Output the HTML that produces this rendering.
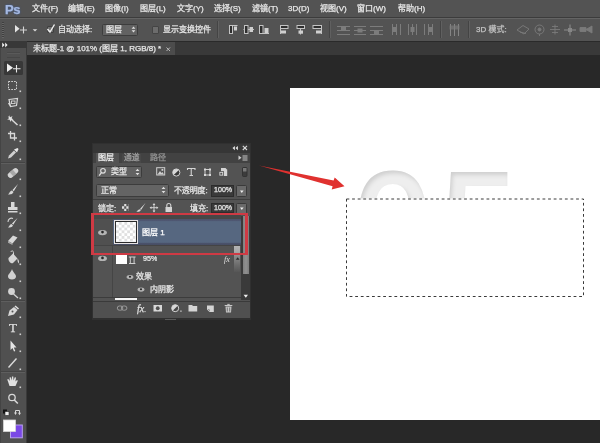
<!DOCTYPE html>
<html><head><meta charset="utf-8">
<style>
html,body{margin:0;padding:0;}
body{width:600px;height:443px;overflow:hidden;background:#282828;position:relative;font-family:"Liberation Sans","Noto Sans CJK SC",sans-serif;font-size:8px;color:#e8e8e8;line-height:1;}
.a{position:absolute;}
.t{position:absolute;white-space:nowrap;}
#menubar{left:0;top:0;width:600px;height:17px;background:#535353;}
#optbar{left:0;top:17px;width:600px;height:24px;background:#535353;border-top:1px solid #3c3c3c;box-sizing:border-box;}
#optbar:before{content:"";position:absolute;left:0;top:0;width:600px;height:1px;background:#646464;}
#tabbar{left:0;top:41px;width:600px;height:13.5px;background:#393939;border-top:1px solid #2a2a2a;box-sizing:border-box;}
#tab{left:27px;top:41.5px;width:148px;height:13.5px;background:#4c4c4c;}
#tools{left:0;top:41px;width:27px;height:402px;background:#505050;}
#toolshead{left:0;top:41px;width:27px;height:7px;background:#383838;}
#canvas{left:290px;top:88px;width:310px;height:332px;background:#fff;}
.m{top:5px;}
.t{-webkit-text-stroke:0.25px currentColor;will-change:transform;}
</style></head><body>
<div class="a" id="menubar"></div>
<div class="a" id="optbar"></div>
<div class="a" id="tabbar"></div>
<div class="a" id="tab"></div>
<div class="a" id="tools"></div>
<div class="a" id="toolshead"></div>
<div class="a" id="canvas"></div>

<!-- menu -->
<div class="t" style="left:4.8px;top:2.6px;font-size:13px;font-weight:bold;color:#a6b9e0;letter-spacing:-0.4px;text-shadow:0 0 2px #3a5fa8;">Ps</div>
<div class="t m" style="left:31.5px;">文件(F)</div>
<div class="t m" style="left:68.2px;">编辑(E)</div>
<div class="t m" style="left:104.8px;">图像(I)</div>
<div class="t m" style="left:140px;">图层(L)</div>
<div class="t m" style="left:176.5px;">文字(Y)</div>
<div class="t m" style="left:213.5px;">选择(S)</div>
<div class="t m" style="left:251.5px;">滤镜(T)</div>
<div class="t m" style="left:288px;">3D(D)</div>
<div class="t m" style="left:320px;">视图(V)</div>
<div class="t m" style="left:357.3px;">窗口(W)</div>
<div class="t m" style="left:398px;">帮助(H)</div>


<!-- options bar -->
<div class="a" style="left:1.5px;top:22px;width:2px;height:16px;background:repeating-linear-gradient(#3a3a3a 0 1px,#6a6a6a 1px 2px);opacity:.8"></div>
<svg class="a" style="left:13px;top:23px" width="26" height="13" viewBox="0 0 26 13">
 <path d="M2 2 L2 9.6 L6.6 5.8 Z" fill="#e4e4e4"/>
 <path d="M10.5 3.5 V10.5 M7 7 H14" stroke="#d4d4d4" stroke-width="1.1" fill="none"/>
 <path d="M19.7 6.2 H24.3 L22 8.6 Z" fill="#d8d8d8"/>
</svg>
<div class="a" style="left:46.5px;top:26px;width:7px;height:7px;background:#6e6e6e;border:0.5px solid #3f3f3f;border-radius:1px;box-sizing:border-box"></div>
<svg class="a" style="left:45px;top:21.7px" width="12" height="13" viewBox="0 0 12 13"><path d="M2.5 7 L5 10 L9.5 2.5" stroke="#f0f0f0" stroke-width="1.4" fill="none"/></svg>
<div class="t" style="left:58px;top:26.3px;">自动选择:</div>
<div class="a" style="left:101.5px;top:23.5px;width:36px;height:12px;background:#626262;border:1px solid #3d3d3d;border-radius:1.5px;box-sizing:border-box"></div>
<div class="t" style="left:106px;top:26.3px;">图层</div>
<svg class="a" style="left:130px;top:25px" width="7" height="9" viewBox="0 0 7 9"><path d="M1.6 3.7 L3.5 1.4 L5.4 3.7 Z M1.6 5.3 L3.5 7.6 L5.4 5.3 Z" fill="#e0e0e0"/></svg>
<div class="a" style="left:151.5px;top:26px;width:7.5px;height:7.5px;background:#6c6c6c;border:0.5px solid #444;border-radius:1px;box-sizing:border-box"></div>
<div class="t" style="left:162.5px;top:26.3px;">显示变换控件</div>
<div class="a" style="left:217px;top:21px;width:1px;height:17px;background:#444"></div>
<div class="a" style="left:218px;top:21px;width:1px;height:17px;background:#606060"></div>
<svg class="a" style="left:226px;top:22px" width="100" height="15" viewBox="0 0 100 15" shape-rendering="auto">
 <g stroke="#c4c4c4" stroke-width="1" fill="#2e2e2e">
  <path d="M3 3.5 H11.5" fill="none"/><rect x="3.5" y="3.5" width="3" height="8"/><rect x="8" y="4.5" width="3" height="4" fill="#cfcfcf" stroke="none"/>
  <path d="M17.5 7.5 H28" fill="none"/><rect x="18.5" y="3.5" width="3.5" height="8"/><rect x="23.5" y="5" width="3.5" height="5" fill="#cfcfcf" stroke="none"/>
  <path d="M33 11.5 H43" fill="none"/><rect x="33.5" y="3.5" width="3.5" height="8"/><rect x="38.5" y="6" width="4" height="5" fill="#cfcfcf" stroke="none"/>
  <path d="M54.5 3 V12" fill="none"/><rect x="54.5" y="3.5" width="7.5" height="3"/><rect x="55" y="8.5" width="5" height="3" fill="#cfcfcf" stroke="none"/>
  <path d="M74.5 3 V12.5" fill="none"/><rect x="71" y="3.5" width="7.5" height="3"/><rect x="72.5" y="8.5" width="4.5" height="3.2" fill="#cfcfcf" stroke="none"/>
  <path d="M95.5 3 V12" fill="none"/><rect x="87" y="3.5" width="8.5" height="3"/><rect x="90" y="8.5" width="5" height="3" fill="#cfcfcf" stroke="none"/>
 </g>
</svg>
<div class="a" style="left:329px;top:21px;width:1px;height:17px;background:#444"></div>
<div class="a" style="left:330px;top:21px;width:1px;height:17px;background:#606060"></div>
<svg class="a" style="left:335px;top:22px" width="100" height="15" viewBox="0 0 100 15">
 <g stroke="#7c7c7c" stroke-width="1" fill="none">
  <path d="M2 4.5 H15 M2 8.5 H15 M2 12.5 H15"/><rect x="6" y="5" width="5" height="3" fill="#7c7c7c" stroke="none"/>
  <path d="M19 4.5 H31 M19 8.5 H31 M19 12.5 H31"/><rect x="22.5" y="6.5" width="5" height="4" fill="#7c7c7c" stroke="none"/>
  <path d="M35 4.5 H48 M35 8.5 H48 M35 12.5 H48"/><rect x="39" y="9" width="5" height="3" fill="#7c7c7c" stroke="none"/>
  <path d="M57.5 2 V13 M61.5 2 V13 M65.5 2 V13"/><rect x="58" y="5" width="3" height="5" fill="#7c7c7c" stroke="none"/>
  <path d="M73.5 2 V13 M77.5 2 V13 M81.5 2 V13"/><rect x="75.5" y="5" width="4" height="5" fill="#7c7c7c" stroke="none"/>
  <path d="M89.5 2 V13 M93.5 2 V13 M97.5 2 V13"/><rect x="94" y="5" width="3" height="5" fill="#7c7c7c" stroke="none"/>
 </g>
</svg>
<div class="a" style="left:440px;top:21px;width:1px;height:17px;background:#444"></div>
<div class="a" style="left:441px;top:21px;width:1px;height:17px;background:#606060"></div>
<svg class="a" style="left:447px;top:22px" width="16" height="15" viewBox="0 0 16 15">
 <g stroke="#858585" stroke-width="1" fill="none"><path d="M3.5 2 V14 M7.5 2 V14 M11.5 2 V14"/><rect x="2.5" y="3.5" width="10" height="4" fill="#7a7a7a" stroke="none" opacity=".7"/></g>
</svg>
<div class="a" style="left:468px;top:21px;width:1px;height:17px;background:#444"></div>
<div class="a" style="left:469px;top:21px;width:1px;height:17px;background:#606060"></div>
<div class="t" style="left:476px;top:26.3px;color:#c4c4c4">3D 模式:</div>
<svg class="a" style="left:514px;top:22px" width="82" height="15" viewBox="0 0 82 15">
 <g stroke="#7a7a7a" stroke-width="0.9" fill="none">
  <path d="M3 8 L9 3.5 L15 7 L10 12 Z M6 10 L12 11.5"/>
  <circle cx="25.5" cy="7.5" r="4.5"/><circle cx="25.5" cy="7.5" r="1.5" fill="#7a7a7a"/><path d="M25.5 12 V14"/>
  <path d="M36 7.5 H46 M41 2.5 V12.5 M38 4.5 H44 M38 10.5 H44"/>
  <path d="M50 8 H62 M56 2.5 V13.5" stroke-width="1.6"/><rect x="54" y="6" width="4" height="4" fill="#868686" stroke="none"/>
  <path d="M66 5.5 H72 V9.5 H66 Z" fill="#7a7a7a"/><path d="M72 7.5 L78 4 V11 Z" fill="#7a7a7a"/>
 </g>
</svg>


<!-- tab -->
<div class="t" style="left:33px;top:45.200px;">未标题-1 @ 101% (图层 1, RGB/8) *</div>
<svg class="a" style="left:164.500px;top:45.500px" width="7" height="7" viewBox="0 0 7 7"><path d="M1.5 1.5 L5 5 M5 1.5 L1.5 5" stroke="#b8b8b8" stroke-width="1"/></svg>
<!-- tools header -->
<svg class="a" style="left:1px;top:42px" width="8" height="6" viewBox="0 0 8 6"><path d="M1.2 0.6 L3.6 3 L1.2 5.4 Z M4.2 0.6 L6.6 3 L4.2 5.4 Z" fill="#f0f0f0"/></svg>
<div class="a" style="left:7px;top:51.5px;width:13px;height:1px;background:#484848"></div>
<div class="a" style="left:7px;top:52.5px;width:13px;height:1px;background:#5a5a5a"></div><div class="a" style="left:7px;top:57px;width:13px;height:1px;background:#464646"></div>
<div class="a" style="left:26px;top:48px;width:1px;height:395px;background:#3a3a3a"></div>
<div class="a" style="left:0px;top:48px;width:1px;height:395px;background:#444"></div>
<!-- tools -->
<div class="a" style="left:3.5px;top:61px;width:19.5px;height:14px;background:#383838;border-radius:1.5px"></div>
<svg class="a" id="toolsvg" style="left:0;top:55px" width="27" height="388" viewBox="0 55 27 388">
 <g fill="#dcdcdc" stroke="none">
  <!-- sub-tool dots -->
  <g fill="#d0d0d0">
  <rect x="19.5" y="90.5" width="1.6" height="1.6"/><rect x="19.5" y="107.5" width="1.6" height="1.6"/><rect x="19.5" y="124.5" width="1.6" height="1.6"/>
  <rect x="19.5" y="140.5" width="1.6" height="1.6"/><rect x="19.5" y="158.5" width="1.6" height="1.6"/>
  <rect x="19.5" y="178.5" width="1.6" height="1.6"/><rect x="19.5" y="195.5" width="1.6" height="1.6"/><rect x="19.5" y="212.5" width="1.6" height="1.6"/>
  <rect x="19.5" y="229.5" width="1.6" height="1.6"/><rect x="19.5" y="246.5" width="1.6" height="1.6"/><rect x="19.5" y="263.5" width="1.6" height="1.6"/>
  <rect x="19.5" y="280.5" width="1.6" height="1.6"/><rect x="19.5" y="297.5" width="1.6" height="1.6"/>
  <rect x="19.5" y="316.5" width="1.6" height="1.6"/><rect x="19.5" y="333.5" width="1.6" height="1.6"/><rect x="19.5" y="350.5" width="1.6" height="1.6"/><rect x="19.5" y="368.5" width="1.6" height="1.6"/>
  <rect x="19.5" y="386.5" width="1.6" height="1.6"/>
  </g>
  <!-- move -->
  <path d="M7 63.5 L7 72 L13 67.8 Z" fill="#f0f0f0"/>
  <path d="M16.5 65 V72.5 M13 68.7 H20.5" stroke="#e8e8e8" stroke-width="1.1" fill="none"/>
  <!-- marquee -->
  <rect x="8.5" y="81.5" width="8" height="8" fill="none" stroke="#d8d8d8" stroke-width="1" stroke-dasharray="1.6 1.2"/>
  <!-- lasso -->
  <path d="M9 99.5 L17.5 98.5 L16.5 105.5 L10.5 106.5 Z M10.5 106.5 L8.5 103" fill="none" stroke="#d8d8d8" stroke-width="1.2"/>
  <rect x="11.5" y="101" width="3.5" height="2.6" fill="none" stroke="#d8d8d8" stroke-width="0.9"/>
  <!-- wand -->
  <path d="M11 119 L17.5 125" stroke="#d8d8d8" stroke-width="1.6" fill="none"/>
  <path d="M9.5 115 L10.3 117.2 L12.5 116 L11.6 118.2 L13.5 119.5 L11.2 119.8 L10.5 122 L9.6 119.8 L7.2 119.6 L9 118.2 L7.8 116 L9.3 117 Z" fill="#e4e4e4"/>
  <!-- crop -->
  <path d="M10.5 131 V138 H17 M8 133.5 H14.5 V140.5" fill="none" stroke="#d8d8d8" stroke-width="1.3"/>
  <!-- eyedropper -->
  <path d="M8 158.5 L9 155.5 L14 150.5 L16 152.5 L11 157.5 Z" fill="#d0d0d0"/>
  <path d="M14 149.5 L17.5 148 L18.5 149 L17 152.5 Z" fill="#e8e8e8"/>
  <!-- healing -->
  <g transform="rotate(-40 13 173)"><rect x="7" y="170.3" width="12" height="5.4" rx="2.4" fill="#d4d4d4"/><rect x="11" y="170.3" width="4" height="5.4" fill="#a8a8a8"/></g>
  <!-- brush -->
  <path d="M18 184 L12.5 190 L13.8 191.3 Z" fill="#e0e0e0"/><path d="M12 190.5 L13.5 192 C 12.5 194.5 10 194.5 8 194.5 C 9.5 193.5 9.5 191 12 190.5 Z" fill="#d4d4d4"/>
  <!-- stamp -->
  <path d="M11 202 H14.5 V207 H17.5 V210 H8 V207 H11 Z" fill="#d8d8d8"/><rect x="8" y="211" width="9.5" height="1.5" fill="#d8d8d8"/>
  <!-- history brush -->
  <path d="M17.5 218 L12 223.5 L13.2 224.7 Z" fill="#e0e0e0"/><path d="M11.5 224 L13 225.5 C 12 227.5 10 227.5 8 227.5 C 9.5 226.5 9.5 224.5 11.5 224 Z" fill="#d4d4d4"/>
  <path d="M8 222 C 8 219 10.5 217.5 13 218.5" fill="none" stroke="#d0d0d0" stroke-width="1.1"/>
  <!-- eraser -->
  <path d="M8 241 L13 235.5 L17.5 237.5 L12.5 243.5 Z" fill="#d8d8d8"/><path d="M8 241 L12.5 243.5 L12.5 245 L8 242.8 Z" fill="#a8a8a8"/>
  <!-- bucket -->
  <path d="M8.5 258 L13 253.5 L17.5 258.5 L13 263 C 11 264 8 261 8.5 258 Z" fill="#d4d4d4"/><path d="M11 252 C 11 250.5 13.5 250.5 13.5 252.5 V256" fill="none" stroke="#d8d8d8" stroke-width="1"/>
  <path d="M17.5 258.5 C 19 260 19.5 262 18.5 263.5 C 17.5 262 17.5 260.5 17.5 258.5 Z" fill="#d8d8d8"/>
  <!-- blur drop -->
  <path d="M12 269 C 13 272.5 16 274 16 276.5 C 16 278.5 14.2 279.5 12 279.5 C 9.8 279.5 8 278.5 8 276.5 C 8 274 11 272.5 12 269 Z" fill="#d0d0d0"/>
  <!-- dodge -->
  <circle cx="11.5" cy="291.5" r="3.4" fill="#d4d4d4"/><path d="M13.5 294 L18 298" stroke="#d4d4d4" stroke-width="1.4"/>
  <!-- pen -->
  <path d="M8 316 L9.5 310.5 L14 307 L17.5 310 L14 314.5 Z" fill="#d8d8d8"/><path d="M15 306 L18.5 309" stroke="#e0e0e0" stroke-width="1.6"/><circle cx="12.5" cy="311.5" r="1" fill="#535353"/>
  <!-- path select -->
  <path d="M10.5 340.5 L10.5 350 L12.5 348 L14 351.5 L15.3 351 L13.8 347.5 L16.5 347.5 Z" fill="#e4e4e4"/>
  <!-- line -->
  <path d="M8.5 367.5 L16.5 358.5" stroke="#dcdcdc" stroke-width="1.4"/>
  <!-- hand -->
  <path d="M9.5 386 L8 381.5 L7.2 379.5 L8.3 379 L9.8 381 L9.6 377.5 L10.8 377.3 L11.6 380.5 L12 376.5 L13.3 376.5 L13.5 380.5 L14.8 377.3 L16 377.6 L15.4 381.5 L17 380 L17.8 380.8 L15.5 386 Z" fill="#e0e0e0"/>
  <!-- zoom -->
  <circle cx="12" cy="397.5" r="3.2" fill="none" stroke="#d8d8d8" stroke-width="1.3"/><path d="M14.3 400 L17.8 403.5" stroke="#d8d8d8" stroke-width="1.6"/>
  <!-- default colors / swap -->
  <rect x="3" y="409.5" width="4" height="4" fill="#111"/><rect x="5" y="411.5" width="4" height="4" fill="#f0f0f0" stroke="#222" stroke-width="0.6"/>
  <path d="M15.5 413.5 V410.5 H19.5 V414" fill="none" stroke="#d8d8d8" stroke-width="1"/><path d="M14 412.5 H17 L15.5 415 Z M18 412.8 H21 L19.5 415.3 Z" fill="#d8d8d8"/>
  <!-- bg / fg swatches -->
  <rect x="10.5" y="425" width="11.800" height="12.800" fill="#7a48e6" stroke="#b9a2ef" stroke-width="1"/>
  <rect x="3.5" y="420" width="12" height="11.5" fill="#ffffff" stroke="#d8d8d8" stroke-width="0.8"/>
 </g>
 <path d="M1 162.500 H25 M1 300.5 H25 M1 371.5 H25" stroke="#444" stroke-width="1"/>
 <path d="M1 163.500 H25 M1 301.5 H25 M1 372.5 H25" stroke="#5e5e5e" stroke-width="1"/>
</svg>
<div class="t" style="left:8.5px;top:320.600px;font-family:'Liberation Serif',serif;font-size:13px;color:#e0e0e0;">T</div>


<!-- canvas content -->
<svg class="a" style="left:290px;top:88px" width="310" height="332" viewBox="290 88 310 332">
 <defs>
  <filter id="inner" x="-5%" y="-5%" width="110%" height="110%">
   <feComponentTransfer in="SourceAlpha" result="inv"><feFuncA type="table" tableValues="1 0"/></feComponentTransfer>
   <feGaussianBlur in="inv" stdDeviation="2.2" result="b"/>
   <feOffset in="b" dx="1.5" dy="2.5" result="o"/>
   <feFlood flood-color="#000" flood-opacity="0.27" result="f"/>
   <feComposite in="f" in2="o" operator="in" result="sh"/>
   <feComposite in="sh" in2="SourceAlpha" operator="in" result="shin"/>
   <feMerge><feMergeNode in="SourceGraphic"/><feMergeNode in="shin"/></feMerge>
  </filter>
  <clipPath id="cl"><rect x="290" y="88" width="310" height="111.5"/></clipPath>
 </defs>
 <g clip-path="url(#cl)">
  <text id="big" x="355.3" y="265.6" font-family="Liberation Sans, sans-serif" font-size="134" letter-spacing="12" fill="#eeeeee" stroke="#eeeeee" stroke-width="4" stroke-linejoin="miter" filter="url(#inner)">05</text>
 </g>
 <rect x="346.5" y="199" width="237" height="97.5" fill="none" stroke="#fff" stroke-width="1"/>
 <rect x="346.5" y="199" width="237" height="97.5" fill="none" stroke="#3a3a3a" stroke-width="1" stroke-dasharray="2.8 2.8"/>
</svg>

<!-- layers panel -->
<div class="a" style="left:92px;top:143px;width:159px;height:177px;background:#303030"></div>
<div class="a" style="left:93px;top:143.500px;width:157px;height:9px;background:#363636"></div>
<div class="a" style="left:93px;top:152.500px;width:157px;height:10.5px;background:#424242"></div>
<div class="a" style="left:93px;top:163px;width:157px;height:155px;background:#535353"></div>
<div class="a" style="left:95.5px;top:153px;width:23px;height:10.5px;background:#535353"></div>
<div class="a" style="left:121.5px;top:153.500px;width:19.5px;height:9px;background:#484848"></div>
<svg class="a" style="left:230px;top:144px" width="20" height="8" viewBox="0 0 20 8"><path d="M4.900 2 L2.500 4.100 L4.900 6.200 Z M7.900 2 L5.500 4.100 L7.900 6.200 Z" fill="#e4e4e4"/><path d="M12.800 1.800 L17 6 M17 1.800 L12.800 6" stroke="#d8d8d8" stroke-width="1.1"/></svg>
<div class="t" style="left:97.800px;top:153.800px;font-size:8px;color:#f0f0f0">图层</div>
<div class="t" style="left:123.500px;top:153.800px;font-size:7.800px;color:#a0a0a0">通道</div>
<div class="t" style="left:150.300px;top:153.800px;font-size:8px;color:#929292">路径</div>
<svg class="a" style="left:237px;top:154px" width="12" height="8" viewBox="0 0 12 8"><path d="M1.500 1.500 L4.500 3.700 L1.500 6 Z" fill="#d0d0d0"/><path d="M5.500 2 H10.500 M5.500 4 H10.500 M5.500 6 H10.500" stroke="#c8c8c8" stroke-width="1"/></svg>
<!-- filter row -->
<div class="a" style="left:95.5px;top:165.500px;width:46px;height:12.5px;background:#626262;border:1px solid #3c3c3c;border-radius:1.5px;box-sizing:border-box"></div>
<svg class="a" style="left:98px;top:167px" width="9" height="10" viewBox="0 0 9 10"><circle cx="5" cy="3.800" r="2.300" fill="none" stroke="#e0e0e0" stroke-width="1.100"/><path d="M3.400 5.600 L1.200 8.600" stroke="#e0e0e0" stroke-width="1.200"/></svg>
<div class="t" style="left:110.5px;top:167.500px;">类型</div>
<svg class="a" style="left:134px;top:167px" width="7" height="10" viewBox="0 0 7 10"><path d="M1.600 4.100 L3.500 1.700 L5.400 4.100 Z M1.600 5.900 L3.500 8.300 L5.400 5.900 Z" fill="#e0e0e0"/></svg>
<svg class="a" style="left:154px;top:165px" width="96" height="14" viewBox="154 165 96 14">
 <rect x="156.700" y="167.700" width="8" height="7.300" fill="none" stroke="#d0d0d0" stroke-width="1"/><path d="M157.500 174.500 L160 171 L161.500 173 L162.500 172 L164 174.500 Z" fill="#d0d0d0"/><rect x="161.500" y="169" width="1.800" height="1.800" fill="#d0d0d0"/>
 <circle cx="176.300" cy="172.500" r="3.600" fill="#3a3a3a" stroke="#d0d0d0" stroke-width="1"/><path d="M176.300 168.900 A3.600 3.600 0 0 0 173.700 175 L178.900 170 A3.600 3.600 0 0 0 176.300 168.900 Z" fill="#d8d8d8"/>
 <path d="M187.500 170 V168.500 H195 V170 M191.250 168.500 V175.500 M189.500 175.500 H193" fill="none" stroke="#d4d4d4" stroke-width="1.100"/>
 <rect x="205" y="169.500" width="5" height="5.500" fill="none" stroke="#d0d0d0" stroke-width="1"/><path d="M204 168.500 h2 v2 h-2 Z M209 168.500 h2 v2 h-2 Z M204 174 h2 v2 h-2 Z M209 174 h2 v2 h-2 Z" fill="#d8d8d8"/>
 <path d="M221 168 H225.500 L227.200 169.700 V176 H221 Z" fill="#d4d4d4"/><rect x="219" y="171.500" width="4.500" height="4.500" fill="#d8d8d8" stroke="#535353" stroke-width="0.800"/><rect x="220.300" y="172.800" width="1.900" height="1.900" fill="#535353"/>
 <rect x="242.500" y="167.500" width="4.500" height="9" rx="1" fill="#3c3c3c" stroke="#2e2e2e" stroke-width="0.800"/><rect x="243" y="168" width="3.500" height="3.500" fill="#7a7a7a"/>
</svg>
<!-- blend row -->
<div class="a" style="left:95.5px;top:184px;width:73px;height:12.5px;background:#646464;border:1px solid #3c3c3c;border-radius:1.5px;box-sizing:border-box"></div>
<div class="t" style="left:100.5px;top:186.500px;">正常</div>
<svg class="a" style="left:159.500px;top:185px" width="7" height="10" viewBox="0 0 7 10"><path d="M1.600 4.100 L3.500 1.700 L5.400 4.100 Z M1.600 5.900 L3.500 8.300 L5.400 5.900 Z" fill="#e0e0e0"/></svg>
<div class="t" style="left:174px;top:186.800px;letter-spacing:-0.15px">不透明度:</div>
<div class="a" style="left:210.500px;top:185px;width:23.500px;height:11.500px;background:#3a3a3a;border:0.5px solid #2c2c2c;box-sizing:border-box"></div>
<div class="t" style="left:213.500px;top:187.400px;font-size:7.100px">100%</div>
<div class="a" style="left:236px;top:184.500px;width:11px;height:12px;background:#6a6a6a;border:0.5px solid #3a3a3a;border-radius:1.5px;box-sizing:border-box"></div>
<svg class="a" style="left:239px;top:189.500px" width="6" height="4" viewBox="0 0 6 4"><path d="M1 0.500 H4.600 L2.800 2.900 Z" fill="#f0f0f0"/></svg>
<div class="a" style="left:93px;top:199px;width:157px;height:1px;background:#3e3e3e"></div>
<!-- lock row -->
<div class="t" style="left:97.5px;top:204.600px;">锁定:</div>
<svg class="a" style="left:118px;top:201.300px" width="60" height="13" viewBox="118 202 60 13">
 <rect x="122" y="205" width="6.500" height="7" fill="#e0e0e0"/><path d="M122 205 h2.200 v2.300 h-2.200 Z M126.300 205 h2.200 v2.300 h-2.200 Z M124.200 207.300 h2.100 v2.400 h-2.100 Z M122 209.700 h2.200 v2.300 h-2.200 Z M126.300 209.700 h2.200 v2.300 h-2.200 Z" fill="#555"/>
 <path d="M145.500 204 L140 210 L141 211 Z" fill="#e0e0e0"/><path d="M139.700 210.300 L140.800 211.400 C 140 212.800 138 212.800 136.300 212.800 C 137.800 212 137.800 210.600 139.700 210.300 Z" fill="#d8d8d8"/>
 <path d="M154 205 V212.500 M150.500 208.700 H157.500" stroke="#d0d0d0" stroke-width="1" fill="none"/><path d="M154 204 L155.400 205.900 H152.600 Z M154 213.400 L155.400 211.500 H152.600 Z M149.600 208.700 L151.500 207.300 V210.100 Z M158.400 208.700 L156.500 207.300 V210.100 Z" fill="#d8d8d8"/>
 <rect x="165.500" y="208" width="6.500" height="5" fill="#d4d4d4"/><path d="M166.800 208 V206.500 A2 2 0 0 1 170.800 206.500 V208" fill="none" stroke="#d4d4d4" stroke-width="1.100"/>
</svg>
<div class="t" style="left:189.500px;top:205px;">填充:</div>
<div class="a" style="left:210.500px;top:203px;width:23.500px;height:10px;background:#3a3a3a;border:0.5px solid #2c2c2c;box-sizing:border-box"></div>
<div class="t" style="left:213.500px;top:205.200px;font-size:7.100px">100%</div>
<div class="a" style="left:236px;top:202.500px;width:11px;height:11px;background:#6a6a6a;border:0.5px solid #3a3a3a;border-radius:1.5px;box-sizing:border-box"></div>
<svg class="a" style="left:239px;top:207px" width="6" height="4" viewBox="0 0 6 4"><path d="M1 0.500 H4.600 L2.800 2.900 Z" fill="#f0f0f0"/></svg>
<!-- layer list -->
<div class="a" style="left:93px;top:215px;width:148px;height:4px;background:#474747"></div>
<div class="a" style="left:112.500px;top:219.200px;width:128px;height:26px;background:linear-gradient(#4c5169 0,#4f5873 1.800px,#566780 2.600px,#566780 23.300px,#4a526b 24.200px,#474d62 26px)"></div>
<div class="a" style="left:93px;top:219.200px;width:19.500px;height:26px;background:#505050"></div>
<div class="a" style="left:93px;top:245.200px;width:148px;height:0.800px;background:#444"></div>
<div class="a" style="left:112px;top:245.500px;width:1px;height:52px;background:#454545"></div>
<div class="a" style="left:113.800px;top:219.700px;width:24.400px;height:24.400px;background:#e8e4e4;"></div>
<div class="a" style="left:115px;top:221px;width:22px;height:22px;background:#2c2c2c;"></div>
<div class="a" style="left:116.200px;top:222.200px;width:19.600px;height:19.600px;background:#fff conic-gradient(#e0e0e0 25%,#fff 0 50%,#e0e0e0 0 75%,#fff 0) 0 0/5.600px 5.600px;"></div>
<div class="t" style="left:142.300px;top:228.800px;color:#fff">图层 1</div>
<svg class="a" style="left:93px;top:225px" width="60" height="72" viewBox="93 225 60 72"><ellipse cx="102.5" cy="232.6" rx="4.40" ry="2.60" fill="#b4b4b4"/><circle cx="102.5" cy="232.10" r="1.35" fill="#262626"/><ellipse cx="102.5" cy="258.4" rx="4.40" ry="2.60" fill="#b4b4b4"/><circle cx="102.5" cy="257.90" r="1.35" fill="#262626"/><ellipse cx="130" cy="277.1" rx="3.43" ry="2.03" fill="#b4b4b4"/><circle cx="130" cy="276.71" r="1.05" fill="#262626"/><ellipse cx="141" cy="289.6" rx="3.43" ry="2.03" fill="#b4b4b4"/><circle cx="141" cy="289.21" r="1.05" fill="#262626"/></svg>
<div class="a" style="left:116px;top:254px;width:11px;height:10px;background:#fff;"></div>
<svg class="a" style="left:128px;top:255px" width="9" height="10" viewBox="0 0 9 10"><path d="M0.800 2 H7.600 M2.300 2 V8.500 M6.100 2 V8.500 M1 8.500 H7.400" stroke="#d0d0d0" stroke-width="1" fill="none"/></svg>
<div class="t" style="left:143.200px;top:255px;font-size:7.200px;color:#e8e8e8;height:6.300px;overflow:hidden">95%</div>
<div class="t" style="left:224px;top:255.800px;font-family:'Liberation Serif',serif;font-style:italic;font-size:8px;color:#e0e0e0;-webkit-text-stroke:0">fx</div>
<div class="t" style="left:136px;top:273.200px;">效果</div>
<div class="t" style="left:149.500px;top:286px;">内阴影</div>
<div class="a" style="left:93px;top:297px;width:148px;height:1px;background:#3c3c3c"></div>
<div class="a" style="left:115px;top:298px;width:21.500px;height:2px;background:#f4f4f4"></div>
<!-- odd light box + scrollbar -->
<div class="a" style="left:233.700px;top:245.700px;width:6.500px;height:26px;background:linear-gradient(#b4b4b4 0,#a8a8a8 22%,#8a8a8a 40%,#6a6a6a 75%,#565656 100%)"></div>
<svg class="a" style="left:234.500px;top:255.500px" width="6" height="5" viewBox="0 0 6 5"><path d="M0.800 3.800 L2.700 1.200 L4.600 3.800 Z" fill="#2c2c2c"/></svg>
<div class="a" style="left:240.500px;top:216px;width:9.500px;height:84px;background:#3a3a3a"></div>
<div class="a" style="left:242.800px;top:216px;width:6.400px;height:58px;background:linear-gradient(90deg,#808080,#909090 50%,#7c7c7c)"></div>
<svg class="a" style="left:243px;top:293.500px" width="6" height="5" viewBox="0 0 6 5"><path d="M0.600 0.800 H5 L2.800 3.800 Z" fill="#f0f0f0"/></svg>
<!-- bottom bar -->
<div class="a" style="left:93px;top:300.500px;width:157px;height:1px;background:#3a3a3a"></div>
<div class="a" style="left:93px;top:301.500px;width:157px;height:16.500px;background:#505050"></div>
<svg class="a" style="left:114px;top:302px" width="124" height="14" viewBox="114 302 124 14">
 <rect x="117.300" y="306" width="5.500" height="4.200" rx="2.100" fill="none" stroke="#9a9a9a" stroke-width="1"/><rect x="121.400" y="306" width="5.500" height="4.200" rx="2.100" fill="none" stroke="#9a9a9a" stroke-width="1"/>
 <rect x="153.500" y="305" width="8.500" height="6.500" fill="#d8d8d8"/><circle cx="157.750" cy="308.250" r="1.900" fill="#505050"/>
 <circle cx="175.200" cy="308.200" r="3.500" fill="#474747" stroke="#d4d4d4" stroke-width="1"/><path d="M175.200 304.700 A3.500 3.500 0 0 0 172.700 310.700 L177.700 305.700 A3.500 3.500 0 0 0 175.200 304.700 Z" fill="#d8d8d8"/><rect x="180.300" y="310.500" width="1.300" height="1.300" fill="#d0d0d0"/>
 <path d="M188.500 305 H192 L193 306 H197.200 V311.500 H188.500 Z" fill="#d4d4d4"/>
 <path d="M207 305.500 H213.800 V312 H209.500 L207 309.500 Z" fill="#d4d4d4"/><path d="M207 309.500 H209.500 V312 Z" fill="#505050"/><path d="M207.300 309.300 L209.700 311.700" stroke="#d4d4d4" stroke-width="0.800"/>
 <path d="M225.500 306.500 H231.500 L231 312.500 H226 Z" fill="#c8c8c8"/><path d="M224.700 305.500 H232.300 M227.300 304.400 H229.700" stroke="#c8c8c8" stroke-width="1"/><path d="M227.300 307.500 V311.500 M229.700 307.500 V311.500" stroke="#505050" stroke-width="0.700"/>
</svg>
<div class="t" style="left:136.500px;top:303.500px;font-family:'Liberation Serif',serif;font-style:italic;font-size:10px;color:#e0e0e0">fx<span style="font-size:6px;font-style:normal">.</span></div>
<div class="a" style="left:165px;top:318.800px;width:11px;height:1px;background:#5a5a5a"></div>
<!-- red highlight -->
<div class="a" style="left:91px;top:213px;width:156.500px;height:42px;border:2.800px solid #cf3a44;border-left-width:3.600px;border-right-width:3.600px;box-sizing:border-box;"></div>

<!-- arrow -->
<svg class="a" style="left:250px;top:155px" width="100" height="40" viewBox="250 155 100 40">
 <path d="M259 165.600 L333.600 180.600 L334.700 177.400 L344.500 186.200 L331.700 189.600 L332.600 186.200 Z" fill="#e0312f"/>
</svg>

</body></html>
